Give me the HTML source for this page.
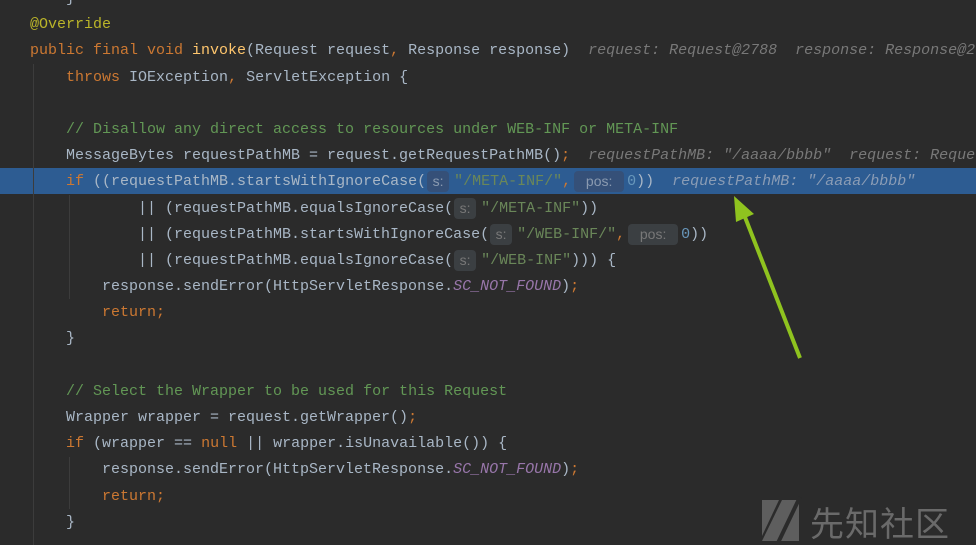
<!DOCTYPE html>
<html><head><meta charset="utf-8"><style>
html,body{margin:0;padding:0;background:#2b2b2b;width:976px;height:545px;overflow:hidden;position:relative}
.code{position:absolute;left:30px;top:-14px;font-family:"Liberation Mono",monospace;font-size:15px;color:#a9b7c6}
.l{height:26.2px;line-height:26.2px;position:relative;white-space:pre}
.hl{position:absolute;left:0;top:168px;width:976px;height:26px;background:#2d5c92}
.k{color:#cc7832}.c{color:#629755}.s{color:#6a8759}.n{color:#6897bb}.a{color:#bbb529}.m{color:#ffc66d}
.h{color:#787878;font-style:italic}.hh{color:#8a9cb5;font-style:italic}
.p{color:#9876aa;font-style:italic}
.b{display:inline-block;box-sizing:border-box;text-align:center;background:#3b3f42;color:#787878;border-radius:4px;line-height:21px;font-family:"Liberation Sans",sans-serif;font-size:14px;margin:0 5px 0 1px;vertical-align:-1px}
.b1{width:22px}.b2{width:50px;margin-left:-6px;margin-right:3px}
.hl2 .b{background:#355078;color:#8a9ab0}
.g{position:absolute;width:1px;background:#3c3c3c}
.wm{position:absolute;left:810px;top:497px;font-family:"Liberation Sans","Noto Sans CJK SC",sans-serif;font-size:34px;color:#6a6a6a;letter-spacing:1px}
</style></head><body>
<div class="hl"></div>
<div class="g" style="left:33px;top:64px;height:481px"></div>
<div class="g" style="left:69px;top:195px;height:104px"></div>
<div class="g" style="left:69px;top:457px;height:52px"></div>
<div class="code">
<div class="l">    }</div>
<div class="l"><span class="a">@Override</span></div>
<div class="l"><span class="k">public final void </span><span class="m">invoke</span>(Request request<span class="k">, </span>Response response)  <span class="h">request: Request@2788  response: Response@2788</span></div>
<div class="l">    <span class="k">throws </span>IOException<span class="k">, </span>ServletException {</div>
<div class="l"> </div>
<div class="l">    <span class="c">// Disallow any direct access to resources under WEB-INF or META-INF</span></div>
<div class="l">    MessageBytes requestPathMB = request.getRequestPathMB()<span class="k">;</span>  <span class="h">requestPathMB: "/aaaa/bbbb"  request: Request@2788</span></div>
<div class="l hl2">    <span class="k">if </span>((requestPathMB.startsWithIgnoreCase(<span class="b b1">s:</span><span class="s">"/META-INF/"</span><span class="k">, </span><span class="b b2">pos:</span><span class="n">0</span>))  <span class="hh">requestPathMB: "/aaaa/bbbb"</span></div>
<div class="l">            || (requestPathMB.equalsIgnoreCase(<span class="b b1">s:</span><span class="s">"/META-INF"</span>))</div>
<div class="l">            || (requestPathMB.startsWithIgnoreCase(<span class="b b1">s:</span><span class="s">"/WEB-INF/"</span><span class="k">, </span><span class="b b2">pos:</span><span class="n">0</span>))</div>
<div class="l">            || (requestPathMB.equalsIgnoreCase(<span class="b b1">s:</span><span class="s">"/WEB-INF"</span>))) {</div>
<div class="l">        response.sendError(HttpServletResponse.<span class="p">SC_NOT_FOUND</span>)<span class="k">;</span></div>
<div class="l">        <span class="k">return;</span></div>
<div class="l">    }</div>
<div class="l"> </div>
<div class="l">    <span class="c">// Select the Wrapper to be used for this Request</span></div>
<div class="l">    Wrapper wrapper = request.getWrapper()<span class="k">;</span></div>
<div class="l">    <span class="k">if </span>(wrapper == <span class="k">null </span>|| wrapper.isUnavailable()) {</div>
<div class="l">        response.sendError(HttpServletResponse.<span class="p">SC_NOT_FOUND</span>)<span class="k">;</span></div>
<div class="l">        <span class="k">return;</span></div>
<div class="l">    }</div>
</div>
<svg style="position:absolute;left:0;top:0" width="976" height="545">
<line x1="800" y1="358" x2="743" y2="212" stroke="#8fc31f" stroke-width="4"/>
<polygon points="734,196 754,214 736,222" fill="#8fc31f"/>
<polygon points="762,541 782,500 799,500 799,541" fill="#5e5e5e"/>
<polygon points="762,500 779,500 762,536" fill="#5e5e5e"/>
<line x1="777" y1="545" x2="800" y2="497" stroke="#2b2b2b" stroke-width="4"/>
</svg>
<div class="wm">先知社区</div>
</body></html>
